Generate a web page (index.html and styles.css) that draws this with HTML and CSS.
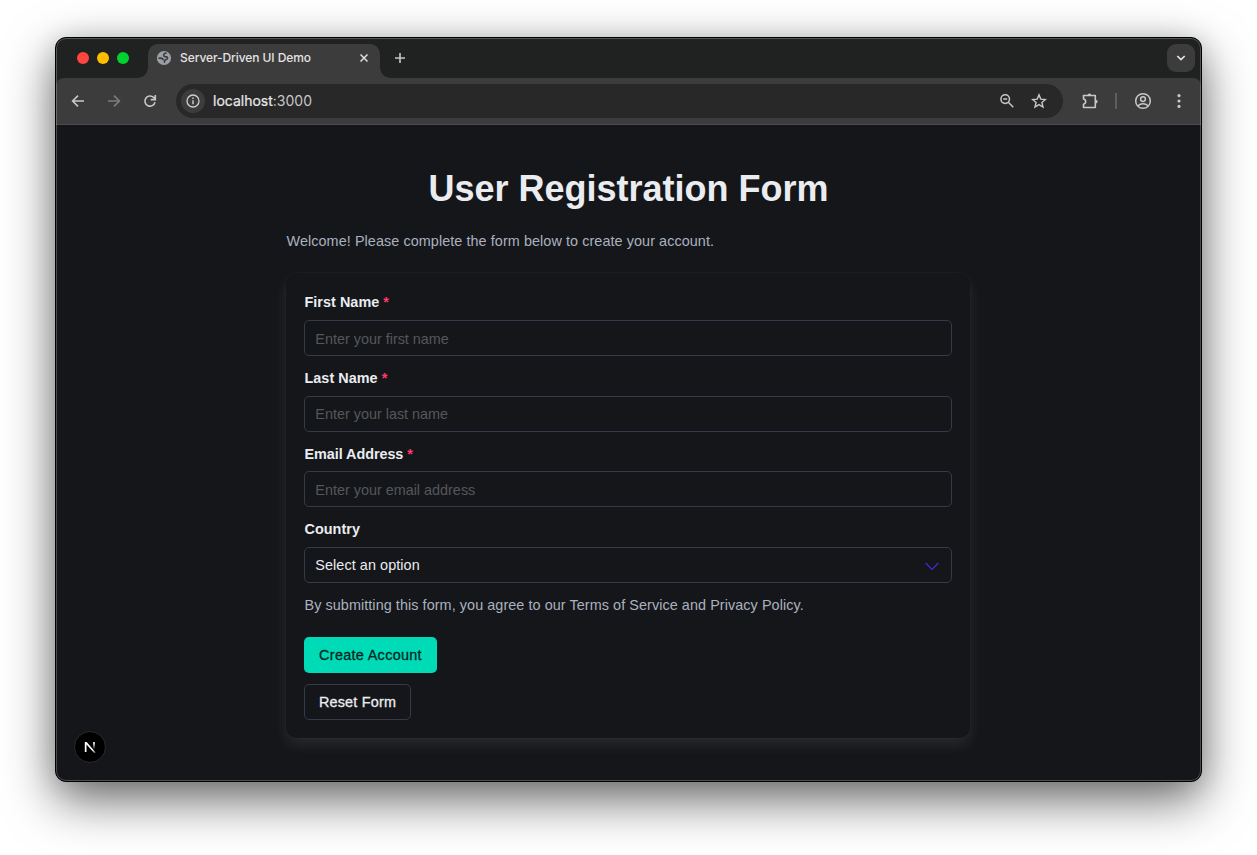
FILE: index.html
```html
<!DOCTYPE html>
<html lang="en">
<head>
<meta charset="utf-8">
<title>Server-Driven UI Demo</title>
<link rel="stylesheet" href="styles.css">
</head>
<body>
<div class="window">
  <div class="tabstrip">
    <div class="lights"><i class="red"></i><i class="yellow"></i><i class="green"></i></div>
    <div class="tab">
      <svg class="globe" width="16" height="16" viewBox="0 0 16 16"><circle cx="8" cy="8" r="7.100" fill="#9aa0a6"/><path d="M10.600 3.200C8.700 3 7.600 3.900 7.700 5.200c.1 1.400 1.500 1.600 2.700 1.700 1.300.2 1.500 1.500.6 2.200-.7.500-1.800.4-2.200 1.300-.3.700 0 1.400-.7 2.300M2.400 8.300c1.500-.2 3.500-.3 4.300.6.4.5.3 1.100.1 1.500" fill="none" stroke="#3c3c3c" stroke-width="1.600"/></svg>
      <span class="tab-title">Server-Driven UI Demo</span>
      <svg class="tab-close" width="8" height="8" viewBox="0 0 8 8"><path d="M.5.5l7 7M7.500.5l-7 7" stroke="#dedede" stroke-width="1.500"/></svg>
    </div>
    <svg class="new-tab" width="12" height="12" viewBox="0 0 12 12"><path d="M6 1v10M1 6h10" stroke="#c7c7c7" stroke-width="1.600"/></svg>
    <div class="tab-menu"><svg width="10" height="6" viewBox="0 0 10 6"><path d="M1.300 1l3.700 3.600L8.700 1" fill="none" stroke="#e3e3e3" stroke-width="1.700"/></svg></div>
  </div>
  <div class="toolbar">
    <svg class="nav" width="16" height="16" viewBox="0 0 16 16"><path d="M14 8H3M8 2.600L2.600 8 8 13.400" fill="none" stroke="#c7c7c7" stroke-width="1.600"/></svg>
    <svg class="nav" width="16" height="16" viewBox="0 0 16 16"><path d="M2 8h11M8 2.600L13.400 8 8 13.400" fill="none" stroke="#7c7c7c" stroke-width="1.600"/></svg>
    <svg class="nav" width="16" height="16" viewBox="0 0 16 16"><path d="M13 9.200A5.100 5.100 0 1 1 11.600 4.400L13.300 6M13.300 2v4.600H8.700" fill="none" stroke="#c7c7c7" stroke-width="1.600"/></svg>
    <div class="address">
      <span class="info"><svg width="14" height="14" viewBox="0 0 14 14"><circle cx="7" cy="7" r="6" fill="none" stroke="#d0d0d0" stroke-width="1.300"/><path d="M7 6.200v4M7 3.600v1.500" stroke="#d0d0d0" stroke-width="1.400"/></svg></span>
      <span class="url"><span class="host">localhost</span>:3000</span>
      <svg class="zoom-icon" width="16" height="16" viewBox="0 0 16 16"><circle cx="6.200" cy="6.100" r="4.300" fill="none" stroke="#c7c7c7" stroke-width="1.500"/><path d="M4.200 6.100h4M9.300 9.200l5 5" stroke="#c7c7c7" stroke-width="1.500"/></svg>
      <svg width="16" height="16" viewBox="0 0 16 16"><path d="M8 1.900l1.800 4.200 4.600.4-3.500 3 1.100 4.500L8 11.600 4 14l1.100-4.500-3.500-3 4.600-.4z" fill="none" stroke="#c7c7c7" stroke-width="1.400"/></svg>
    </div>
    <svg class="puzzle" width="18" height="18" viewBox="0 0 18 18"><path d="M2.500 3.500h11.800v12H2.500v-3.300c1.400-.3 2.200-1.300 2.200-2.600S3.900 7.200 2.500 6.900z" fill="none" stroke="#c7c7c7" stroke-width="1.600" stroke-linejoin="round"/><path d="M6.500 3.400a1.900 1.900 0 0 1 3.800 0zM14.700 7.700a1.900 1.900 0 0 1 0 3.800z" fill="#c7c7c7"/></svg>
    <span class="divider"></span>
    <svg class="profile" width="18" height="18" viewBox="0 0 18 18"><g fill="none" stroke="#c7c7c7" stroke-width="1.500"><circle cx="9" cy="9" r="7.300"/><circle cx="9" cy="7.100" r="2.400"/><path d="M3.800 14c1.400-1.500 3.100-2.200 5.200-2.200s3.800.7 5.200 2.200"/></g></svg>
    <svg class="more" width="4" height="16" viewBox="0 0 4 16" fill="#c7c7c7"><circle cx="2" cy="2.600" r="1.600"/><circle cx="2" cy="8" r="1.600"/><circle cx="2" cy="13.400" r="1.600"/></svg>
  </div>
  <main class="page">
    <div class="container">
      <h1 class="title">User Registration Form</h1>
      <p class="intro">Welcome! Please complete the form below to create your account.</p>
      <form class="card">
        <div class="field"><label class="label">First Name <span class="required">*</span></label><input class="input" type="text" placeholder="Enter your first name"></div>
        <div class="field"><label class="label">Last Name <span class="required">*</span></label><input class="input last-name" type="text" placeholder="Enter your last name"></div>
        <div class="field"><label class="label email-label">Email Address <span class="required">*</span></label><input class="input" type="email" placeholder="Enter your email address"></div>
        <div class="field"><label class="label">Country</label><div class="input select"><span>Select an option</span><svg width="14" height="9" viewBox="0 0 14 9"><path d="M.6 1L7 7.400 13.400 1" fill="none" stroke="#4329dc" stroke-width="1.300"/></svg></div></div>
        <p class="terms">By submitting this form, you agree to our Terms of Service and Privacy Policy.</p>
        <div class="actions">
          <button class="button primary" type="button">Create Account</button>
          <button class="button outline" type="button">Reset Form</button>
        </div>
      </form>
    </div>
    <div class="next-badge"><svg width="12" height="12" viewBox="0 0 12 12"><defs><linearGradient id="diag" x1="0" y1="0" x2="1" y2="1"><stop offset=".7" stop-color="#fff"/><stop offset="1" stop-color="#fff" stop-opacity=".3"/></linearGradient><linearGradient id="stem" x1="0" y1="0" x2="0" y2="1"><stop offset=".2" stop-color="#fff"/><stop offset="1" stop-color="#fff" stop-opacity="0"/></linearGradient></defs><path d="M.8 11V1h1.900l9 10.500-1.400.6L2.500 3.500V11z" fill="url(#diag)"/><path d="M9.200 1h1.600v7.500H9.200z" fill="url(#stem)"/></svg></div>
  </main>
</div>
</body>
</html>
```
FILE: styles.css
```css
* { box-sizing: border-box; }
html, body { margin: 0; height: 100%; }
body {
  background: #fff;
  padding: 37px 55px 73px;
  overflow: hidden;
  font-family: "Liberation Sans", Arial, sans-serif;
}
svg { display: block; flex: none; }

.window {
  position: relative;
  width: 1147px;
  height: 745px;
  border: 1px solid #000;
  border-radius: 11px;
  overflow: hidden;
  display: flex;
  flex-direction: column;
  background: #202221;
  box-shadow: 0 18px 50px rgba(0, 0, 0, .58), 0 2px 26px rgba(0, 0, 0, .12);
}
.window::after {
  content: "";
  position: absolute;
  inset: 0;
  border: 1px solid rgba(255, 255, 255, .24);
  border-radius: 10px;
  pointer-events: none;
}

.tabstrip {
  height: 40px;
  flex: none;
  display: flex;
  align-items: center;
}
.lights { display: flex; gap: 8px; padding-left: 21px; width: 92px; }
.lights i { width: 12px; height: 12px; border-radius: 50%; }
.red { background: #ff453f; }
.yellow { background: #ffbd00; }
.green { background: #00d22f; }
.tab {
  position: relative;
  width: 232px;
  height: 34px;
  margin-top: 6px;
  padding: 0 12px 6px 8px;
  display: flex;
  align-items: center;
  background: #3c3c3c;
  border-radius: 10px 10px 0 0;
}
.tab::before, .tab::after {
  content: "";
  position: absolute;
  bottom: 0;
  width: 10px;
  height: 10px;
}
.tab::before { left: -10px; background: radial-gradient(circle at 0 0, transparent 9.500px, #3c3c3c 10px); }
.tab::after { right: -10px; background: radial-gradient(circle at 100% 0, transparent 9.500px, #3c3c3c 10px); }
.tab-title {
  margin-left: 8px;
  font: 500 12px/16px Inter, sans-serif;
  letter-spacing: -.08px;
  color: #e3e3e3;
  white-space: nowrap;
}
.tab-close { margin-left: auto; }
.new-tab { margin-left: 14px; }
.tab-menu {
  width: 28px;
  height: 28px;
  margin-left: auto;
  margin-right: 6px;
  border-radius: 9px;
  background: #3c3c3c;
  display: grid;
  place-items: center;
}

.toolbar {
  height: 47px;
  flex: none;
  display: flex;
  align-items: center;
  padding: 0 20px 1px 14px;
  background: #3c3c3c;
  border-bottom: 1px solid #4b4c4f;
  border-radius: 8px 8px 0 0;
}
.nav { margin-right: 20px; }
.address {
  width: 887px;
  height: 34px;
  margin-left: -2px;
  padding: 0 16px 0 5px;
  border-radius: 17px;
  background: #282828;
  display: flex;
  align-items: center;
}
.info {
  width: 24px;
  height: 24px;
  border-radius: 50%;
  background: #3c3c3c;
  display: grid;
  place-items: center;
}
.url {
  margin-left: 8px;
  font: 400 14px/20px Inter, sans-serif;
  color: #c7c7c7;
}
.host { color: #e8e8e8; -webkit-text-stroke: .2px #e8e8e8; }
.zoom-icon { margin-left: auto; margin-right: 16px; }
.puzzle { margin-left: 18px; }
.divider { width: 2px; height: 16px; margin: 0 18px 0 16px; background: #5d5d5d; }
.profile { margin-left: -1px; }
.more { margin-left: auto; }

.page {
  position: relative;
  flex: 1;
  background: #14161a;
  color: #ebecf0;
}
.container { width: 684px; margin: 0 auto 0 230px; padding-top: 44px; }
.title {
  margin: 0;
  padding-left: 1px;
  text-align: center;
  font-size: 36px;
  line-height: 40px;
  font-weight: 700;
  white-space: nowrap;
}
.intro {
  margin: 21px 0;
  padding-left: .5px;
  font-size: 14.400px;
  line-height: 22px;
  letter-spacing: .075px;
  color: #abb1bf;
}
.card {
  height: 465px;
  padding: 18.200px 18px 0;
  border-radius: 10.800px;
  background: #14161a;
  box-shadow: 0 7.200px 14.400px -1.800px rgba(235, 236, 240, .1), 0 0 0 1px rgba(235, 236, 240, .02);
}
.field { margin-bottom: 10.800px; }
.label {
  display: block;
  margin-bottom: 5.200px;
  padding-left: .5px;
  font-size: 14.400px;
  line-height: 23.600px;
  letter-spacing: .04px;
  font-weight: 700;
}
.email-label { padding-top: 1px; margin-bottom: 4.200px; letter-spacing: -.05px; }
.required { color: #ff3870; }
.input {
  display: block;
  width: 100%;
  height: 36px;
  padding: 2px 10.300px 0;
  border: 1px solid #343a48;
  border-radius: 5px;
  background: #14161a;
  color: #ebecf0;
  font: 14.400px/21.600px "Liberation Sans", Arial, sans-serif;
}
.input::placeholder { color: #55575b; opacity: 1; }
.last-name { padding-top: 0; }
.select {
  display: flex;
  align-items: center;
  justify-content: space-between;
  padding-right: 12.500px;
  letter-spacing: .08px;
}
.select svg { margin-top: 2px; }
.terms {
  margin: 0 0 20.900px;
  padding: 1px 0 0 .5px;
  font-size: 14.400px;
  line-height: 21.600px;
  letter-spacing: .07px;
  color: #abb1bf;
  white-space: nowrap;
}
.actions { display: flex; flex-direction: column; align-items: flex-start; gap: 11px; }
.button {
  height: 36px;
  padding: 2px 0 0;
  border: 1px solid transparent;
  border-radius: 5px;
  font: 14.400px/21.600px "Liberation Sans", Arial, sans-serif;
  letter-spacing: .32px;
  -webkit-text-stroke: .3px currentColor;
}
.primary { width: 133px; background: #00dbb7; color: #00251f; }
.outline { width: 107px; background: transparent; border-color: #343a48; color: #ebecf0; letter-spacing: .2px; }

.next-badge {
  position: absolute;
  left: 18px;
  bottom: 18px;
  width: 32px;
  height: 32px;
  border: 1px solid #2b2b2c;
  border-radius: 50%;
  background: #000;
  display: grid;
  place-items: center;
}
```
